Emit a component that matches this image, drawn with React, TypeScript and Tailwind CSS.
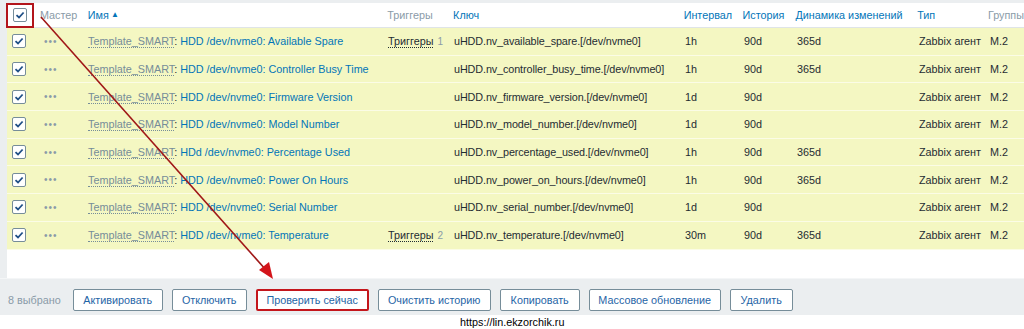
import React from "react";

const rows = [
  { name: "HDD /dev/nvme0: Available Spare", trig: "1", key: "uHDD.nv_available_spare.[/dev/nvme0]", int: "1h", trend: "365d" },
  { name: "HDD /dev/nvme0: Controller Busy Time", trig: "", key: "uHDD.nv_controller_busy_time.[/dev/nvme0]", int: "1h", trend: "365d" },
  { name: "HDD /dev/nvme0: Firmware Version", trig: "", key: "uHDD.nv_firmware_version.[/dev/nvme0]", int: "1d", trend: "" },
  { name: "HDD /dev/nvme0: Model Number", trig: "", key: "uHDD.nv_model_number.[/dev/nvme0]", int: "1d", trend: "" },
  { name: "HDd /dev/nvme0: Percentage Used", trig: "", key: "uHDD.nv_percentage_used.[/dev/nvme0]", int: "1h", trend: "365d" },
  { name: "HDD /dev/nvme0: Power On Hours", trig: "", key: "uHDD.nv_power_on_hours.[/dev/nvme0]", int: "1h", trend: "365d" },
  { name: "HDD /dev/nvme0: Serial Number", trig: "", key: "uHDD.nv_serial_number.[/dev/nvme0]", int: "1d", trend: "" },
  { name: "HDD /dev/nvme0: Temperature", trig: "2", key: "uHDD.nv_temperature.[/dev/nvme0]", int: "30m", trend: "365d" },
];

function Check() {
  return (
    <span className="w-[14px] h-[14px] border border-[#768d99] bg-white rounded-[2px] flex items-center justify-center">
      <svg width="10" height="10" viewBox="0 0 10 10">
        <path d="M1.5 5.2 L4 7.5 L8.6 2.5" fill="none" stroke="#1f4f86" strokeWidth="1.8" />
      </svg>
    </span>
  );
}

const buttons = [
  { t: "Активировать", w: "w-[90px]" },
  { t: "Отключить", w: "w-[75px]" },
  { t: "Проверить сейчас", w: "w-[113px]" },
  { t: "Очистить историю", w: "w-[113px]" },
  { t: "Копировать", w: "w-[80px]" },
  { t: "Массовое обновление", w: "w-[132px]" },
  { t: "Удалить", w: "w-[63px]" },
];

export default function App() {
  return (
    <div className="w-[1024px] h-[329px] bg-white relative overflow-hidden font-['Liberation_Sans',Arial,sans-serif] text-[10.8px] text-[#1f2c33]">
      <div className="bg-[#ebeef0] pl-[7px] pt-[3px]">
        <div className="bg-white h-[275px]">
          <div className="flex items-center h-[25px] border-b border-[#dfe4e7] whitespace-nowrap">
            <div className="w-[33px] pl-[6px]"><Check /></div>
            <div className="w-[48px] text-[#8a9ba8]">Мастер</div>
            <div className="w-[300px] text-[#0275b8] flex items-center gap-[2px]">Имя<span className="text-[8px]">▲</span></div>
            <div className="w-[66px] text-[#8a9ba8]">Триггеры</div>
            <div className="w-[231px] text-[#0275b8]">Ключ</div>
            <div className="w-[59px] text-[#0275b8]">Интервал</div>
            <div className="w-[53px] text-[#0275b8]">История</div>
            <div className="w-[122px] text-[#0275b8]">Динамика изменений</div>
            <div className="w-[71px] text-[#0275b8]">Тип</div>
            <div className="text-[#8a9ba8]">Группы</div>
          </div>
          {rows.map((r, i) => (
            <div key={i} className="flex items-center h-[27.7px] bg-[#f4f7c2] border-b border-[#fbfce6] whitespace-nowrap">
              <div className="w-[33px] pl-[5px]"><Check /></div>
              <div className="w-[48px] pl-[4px] text-[#8a9ba8] tracking-[1px] text-[10px]">•••</div>
              <div className="w-[300px]">
                <span className="text-[#768d99] border-b border-dotted border-[#768d99]">Template_SMART</span>
                <span>: </span>
                <span className="text-[#0275b8]">{r.name}</span>
              </div>
              <div className="w-[66px]">
                {r.trig && (
                  <>
                    <span className="border-b border-dotted border-[#1f2c33]">Триггеры</span>
                    <span className="text-[#8a9ba8] text-[10px] ml-[4px]">{r.trig}</span>
                  </>
                )}
              </div>
              <div className="w-[231px] tracking-[-0.1px]">{r.key}</div>
              <div className="w-[59px]">{r.int}</div>
              <div className="w-[53px]">90d</div>
              <div className="w-[122px]">{r.trend}</div>
              <div className="w-[71px]">Zabbix агент</div>
              <div>M.2</div>
            </div>
          ))}
        </div>
      </div>
      <div className="bg-[#ebeef0] h-[37px] flex items-start pt-[10px] pl-[8px] border-t border-[#f4f6f7]">
        <span className="text-[#8a9ba8] mr-[12px] leading-[22px]">8 выбрано</span>
        <div className="flex gap-[9px]">
          {buttons.map((b, i) => (
            <span
              key={b.t}
              className={
                "h-[22px] flex items-center justify-center whitespace-nowrap rounded-[2px] bg-white text-[#1f65a6] " +
                b.w +
                " " +
                (i === 2 ? "border-2 border-[#c4161c]" : "border border-[#768d99]")
              }
            >
              {b.t}
            </span>
          ))}
        </div>
      </div>
      <div className="text-black pl-[460px] leading-[14px]">https://lin.ekzorchik.ru</div>

      <svg className="absolute left-0 top-0 pointer-events-none" width="1024" height="329">
        <rect x="7" y="4" width="26" height="23" fill="none" stroke="#b3151b" strokeWidth="2" />
        <line x1="41" y1="17" x2="266" y2="270" stroke="#a01818" strokeWidth="1.6" />
        <polygon points="273,279 259,270 269,262" fill="#d3141a" />
      </svg>
    </div>
  );
}
